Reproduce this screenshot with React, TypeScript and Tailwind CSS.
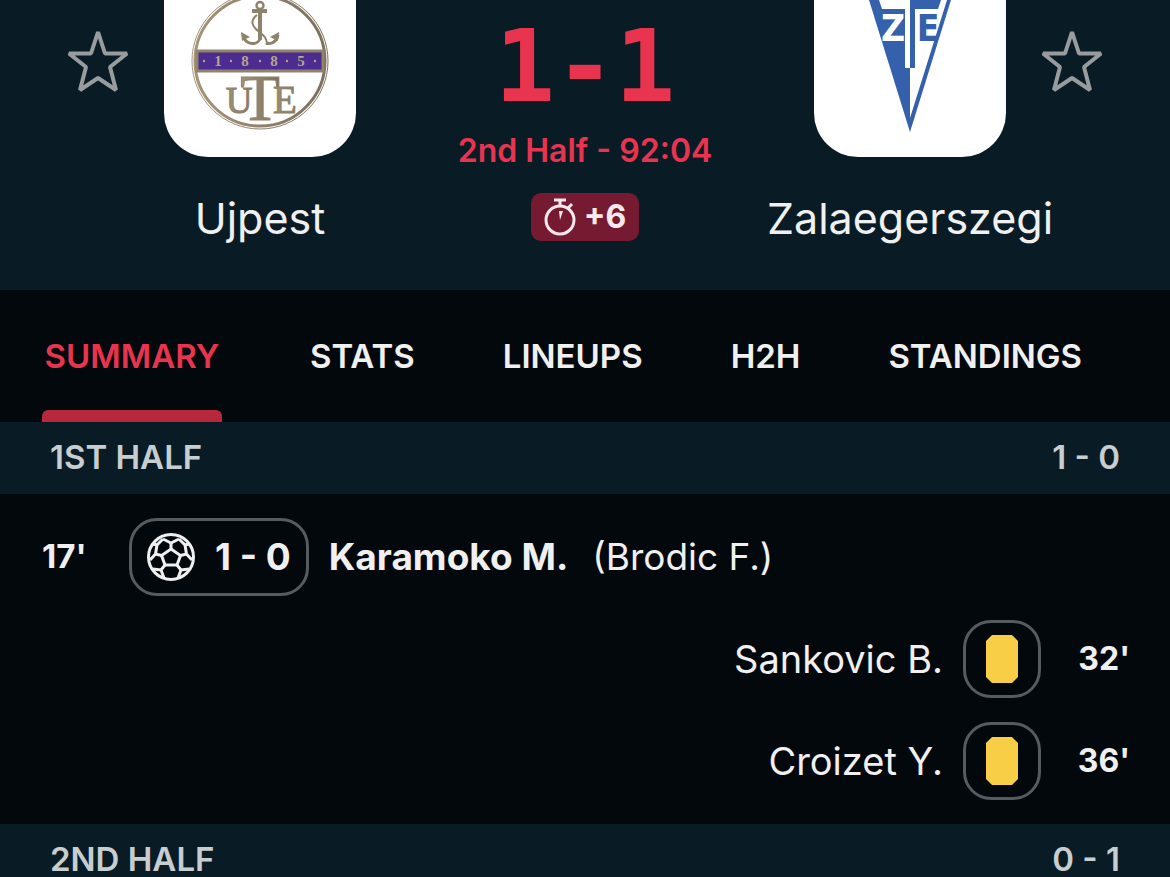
import { FC, ReactNode } from "react";

const tabs = ["SUMMARY", "STATS", "LINEUPS", "H2H", "STANDINGS"];

const cards = [
    { player: "Sankovic B.", minute: "32'" },
    { player: "Croizet Y.", minute: "36'" },
];

const StarButton: FC<{ team: string }> = ({ team }) => (
    <button type="button" aria-label={`Follow ${team}`} className="mt-[30px] size-[60px] shrink-0">
        <svg
            viewBox="0 0 60 60"
            className="size-full overflow-visible"
            fill="none"
            stroke="#999c9e"
            strokeWidth="4"
            strokeLinejoin="bevel"
        >
            <path d="M30 2 37 23.500H59L42 37 48 60 30 48 12 60 18 37 1 23.500h22z" />
        </svg>
    </button>
);

const UjpestLogo: FC = () => (
    <svg viewBox="0 0 192 157" className="size-full">
        <defs>
            <linearGradient id="gold" x1="0" x2="1">
                <stop offset="0" stopColor="#a4957a" />
                <stop offset="1" stopColor="#7b705c" />
            </linearGradient>
        </defs>
        <g fill="none" stroke="url(#gold)">
            <circle cx="96" cy="61" r="68" strokeWidth="1" />
            <circle cx="96" cy="61" r="65" strokeWidth="3" />
        </g>
        <path d="M33 51H159V71H33z" fill="#4d2c91" stroke="#91836c" strokeWidth="3" />
        <g fill="none" stroke="#8f826a" strokeWidth="3">
            <circle cx="96" cy="5.500" r="3.500" strokeWidth="2.500" />
            <path d="M96 9V40M88 11h15" strokeWidth="4" />
            <path d="M79 35c2 10 14 11 17 4M102 43c6 2 11-2 12-8" />
            <path d="M93 15c-8 6-4 12 1 16s9 6 9 14" strokeWidth="2" />
        </g>
        <path d="M77 32l9 5-8 4zM115 32l-9 5 8 4z" fill="#8f826a" />
        <g fontFamily="Liberation Serif, serif" textAnchor="middle">
            <g fontSize="15" fontWeight="700" fill="#b3a68b">
                <text x="54" y="66">1</text>
                <text x="81" y="66">8</text>
                <text x="110" y="66">8</text>
                <text x="137" y="66">5</text>
            </g>
            <g fill="url(#gold)" stroke="#8f826a">
                <text x="75" y="113" fontSize="37" strokeWidth="1">U</text>
                <text x="96" y="120" fontSize="65" strokeWidth="1">T</text>
                <text x="121" y="113" fontSize="39" strokeWidth="1">E</text>
            </g>
        </g>
        <g fill="#b3a68b">
            <circle cx="40" cy="61" r="1.200" />
            <circle cx="67" cy="61" r="1.200" />
            <circle cx="96" cy="61" r="1.200" />
            <circle cx="123" cy="61" r="1.200" />
            <circle cx="151" cy="61" r="1.200" />
        </g>
    </svg>
);

const ZalaegerszegiLogo: FC = () => (
    <svg viewBox="0 0 192 157" className="size-full">
        <path d="M55 0H137L96 132z" fill="#3560ac" />
        <path d="M65 0H91V9H68zM96 9H124L127 0H133L96 118z" fill="#fff" />
        <path d="M96 0H124L121 9H96z" fill="#3560ac" />
        <path d="M91 0h5v68h-5z" fill="#fff" />
        <path d="M96 0h5v68h-5z" fill="#3560ac" />
        <g
            fontFamily="Liberation Sans Narrow, DejaVu Sans Condensed, Liberation Sans, sans-serif"
            fontWeight="700"
            fontSize="37"
            textAnchor="middle"
        >
            <text x="79" y="41" fill="#fff">Z</text>
            <text x="114" y="41" fill="#3560ac">E</text>
        </g>
    </svg>
);

const BallIcon: FC = () => (
    <svg viewBox="0 0 48 48" className="size-12" fill="none" stroke="#f0f0f1" strokeWidth="3">
        <circle cx="24" cy="24" r="22.500" />
        <path d="M24 16l9.500 6.500L30 32H18l-3.500-9.500z" />
        <path d="M24 16V10M33.500 22.500l6-1.500M30 32l4 5M18 32l-4 5M14.500 22.500l-6-1.500" />
        <path d="M24 10l-8-4M24 10l8-4M16 6l-6 6-1.500 9L3 27M32 6l6 6 1.500 9L45 27" />
        <path d="M10 12l-4-1M38 12l4-1M14 37l3 8M34 37l-3 8M14 37l-8-1M34 37l8-1" />
    </svg>
);

const StopwatchIcon: FC = () => (
    <svg viewBox="0 0 32 38" className="h-[38px] w-8" fill="none" stroke="#f7e9ee" strokeWidth="3">
        <circle cx="16" cy="22" r="14" />
        <path d="M16 8V2M10 2h12M24 10l4-4" />
        <path d="M15 13h4l-3 9z" fill="#f7e9ee" stroke="none" />
    </svg>
);

const Team: FC<{ name: string; side: "home" | "away"; children: ReactNode }> = ({ name, side, children }) => (
    <div className="flex min-w-0 flex-[4] flex-col items-center">
        <div className={`flex gap-9 ${side === "away" ? "flex-row-reverse" : ""}`}>
            <StarButton team={name} />
            <div className="h-[157px] w-48 overflow-hidden rounded-b-[44px] bg-white">{children}</div>
            <div className="w-[60px]" />
        </div>
        <h2 className="mt-9 text-[43px] leading-[50px]">{name}</h2>
    </div>
);

const HalfHeader: FC<{ title: string; score: string }> = ({ title, score }) => (
    <div className="flex h-[72px] items-center justify-between bg-[#091c26] px-[50px] text-[33px] font-semibold text-[#c8cdd0]">
        <h3>{title}</h3>
        <span>{score}</span>
    </div>
);

const App: FC = () => {
    return (
        <main className="h-screen overflow-hidden bg-[#02080b] font-['Inter',sans-serif] text-[#f0f0f1]">
            <header className="flex h-[290px] bg-[#091c26]">
                <Team name="Ujpest" side="home">
                    <UjpestLogo />
                </Team>
                <div className="flex min-w-0 flex-1 flex-col items-center pt-[17px] whitespace-nowrap text-[#e8344e]">
                    <div className="font-['DejaVu_Sans_Mono',monospace] text-[100px] leading-[100px] font-bold">1-1</div>
                    <p className="mt-[14px] text-[32px] leading-10 font-semibold">2nd Half - 92:04</p>
                    <div className="mt-[22px] flex h-12 w-[108px] items-center justify-center gap-2 rounded-[10px] bg-[#761a32] text-[#f7e9ee]">
                        <StopwatchIcon />
                        <span className="text-[32px] font-bold">+6</span>
                    </div>
                </div>
                <Team name="Zalaegerszegi" side="away">
                    <ZalaegerszegiLogo />
                </Team>
            </header>

            <nav className="flex h-[132px] gap-[88px] pl-[42px]">
                {tabs.map((tab, i) => (
                    <button
                        key={tab}
                        type="button"
                        className={`flex flex-col items-center justify-between pt-[46px] text-[33px] leading-10 font-semibold ${i === 0 ? "min-w-[180px] text-[#e8344e]" : ""}`}
                    >
                        {tab}
                        {i === 0 && <span className="h-3 w-full rounded-t-md bg-[#b9273d]" />}
                    </button>
                ))}
            </nav>

            <HalfHeader title="1ST HALF" score="1 - 0" />
            <ul className="py-3 text-[38px]">
                <li className="flex h-[102px] items-center pl-[42px] text-[37px]">
                    <span className="w-[87px] text-[33px] font-bold">17'</span>
                    <div className="flex h-[78px] items-center gap-5 rounded-[28px] border-3 border-[#555b5e] px-[15px] font-bold">
                        <BallIcon />
                        <span>1 - 0</span>
                    </div>
                    <span className="ml-5 font-bold">Karamoko M.</span>
                    <span className="ml-6">(Brodic F.)</span>
                </li>
                {cards.map((card) => (
                    <li key={card.minute} className="flex h-[102px] items-center justify-end pr-10">
                        <span>{card.player}</span>
                        <div className="ml-5 flex size-[78px] items-center justify-center rounded-[28px] border-3 border-[#555b5e]">
                            <svg viewBox="0 0 32 48" className="h-12 w-8" role="img" aria-label="Yellow card">
                                <path d="M6 0H26L32 6V42L26 48H6L0 42V6z" fill="#f8ce46" />
                            </svg>
                        </div>
                        <span className="w-[89px] text-right text-[32px] font-bold">{card.minute}</span>
                    </li>
                ))}
            </ul>
            <HalfHeader title="2ND HALF" score="0 - 1" />
        </main>
    );
};

export default App;
